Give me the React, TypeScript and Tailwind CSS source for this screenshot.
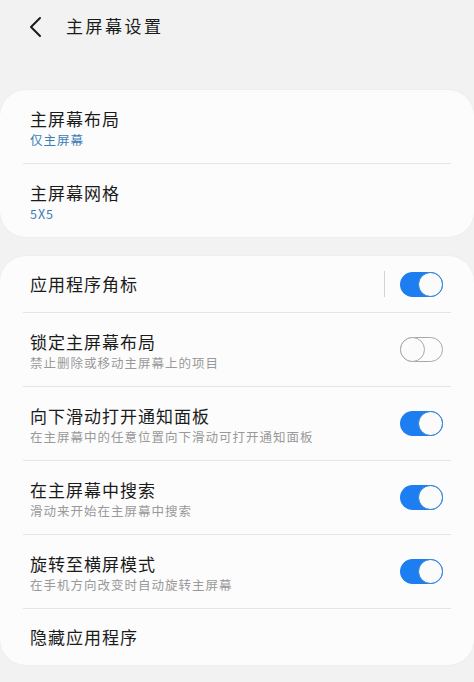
import React from "react";

const font = { fontFamily: '"Noto Sans CJK SC", "Noto Sans", sans-serif' };

function Toggle({ on }: { on: boolean }) {
  if (on) {
    return (
      <div className="relative w-[43px] h-[25px] shrink-0">
        <div className="absolute left-0 top-0 w-[43px] h-[25px] rounded-full bg-[#1c7ef0]" />
        <div className="absolute right-0 top-0 w-[25px] h-[25px] rounded-full bg-[#fbfbfb] border-[1.5px] border-[#2a7fd6]" />
      </div>
    );
  }
  return (
    <div className="relative w-[43px] h-[25px] shrink-0">
      <div className="absolute left-0 top-0 w-[43px] h-[25px] rounded-full border-[1.5px] border-[#a9a9a9]" />
      <div className="absolute left-0 top-0 w-[25px] h-[25px] rounded-full bg-[#fbfbfb] border-[1.5px] border-[#a9a9a9]" />
    </div>
  );
}

function Divider() {
  return <div className="mx-[23px] h-px bg-[#e5e5e5]" />;
}

type Row = { title: string; sub?: string; subBlue?: boolean; toggle?: boolean; on?: boolean; sep?: boolean };

function RowItem({ r }: { r: Row }) {
  const hasSub = !!r.sub;
  return (
    <div className={`flex items-center pl-[30px] pr-[31px] ${hasSub ? "h-[73px]" : "h-[56px]"}`}>
      <div className={`flex-1 flex flex-col ${hasSub ? "pt-[5px]" : ""}`}>
        <div className="text-[17px] leading-[22px] tracking-[1px] text-[#1b1b1b]">{r.title}</div>
        {r.sub && (
          <div
            className={`text-[12.5px] leading-[20px] tracking-[1px] ${r.subBlue ? "text-[#3b7db5]" : "text-[#999999]"}`}
          >
            {r.sub}
          </div>
        )}
      </div>
      {r.sep && <div className="w-px h-[26px] bg-[#d4d4d4] mr-[15px]" />}
      {r.toggle && <Toggle on={!!r.on} />}
    </div>
  );
}

function Card({ rows }: { rows: Row[] }) {
  return (
    <div className="bg-[#fcfcfc] rounded-[26px] shadow-[0_0_2px_rgba(0,0,0,0.06)]">
      {rows.map((r, i) => (
        <React.Fragment key={i}>
          {i > 0 && <Divider />}
          <RowItem r={r} />
        </React.Fragment>
      ))}
    </div>
  );
}

export default function App() {
  const card1: Row[] = [
    { title: "主屏幕布局", sub: "仅主屏幕", subBlue: true },
    { title: "主屏幕网格", sub: "5X5", subBlue: true },
  ];
  const card2: Row[] = [
    { title: "应用程序角标", toggle: true, on: true, sep: true },
    { title: "锁定主屏幕布局", sub: "禁止删除或移动主屏幕上的项目", toggle: true, on: false },
    { title: "向下滑动打开通知面板", sub: "在主屏幕中的任意位置向下滑动可打开通知面板", toggle: true, on: true },
    { title: "在主屏幕中搜索", sub: "滑动来开始在主屏幕中搜索", toggle: true, on: true },
    { title: "旋转至横屏模式", sub: "在手机方向改变时自动旋转主屏幕", toggle: true, on: true },
    { title: "隐藏应用程序" },
  ];
  return (
    <div className="w-[474px] h-[682px] bg-[#f2f2f2] overflow-hidden" style={font}>
      <div className="h-[90px] flex items-start pt-[14px]">
        <div className="w-[66px] flex justify-start pl-[28px] pt-[2px]">
          <svg width="16" height="22" viewBox="0 0 16 22" fill="none">
            <path d="M12 2 L3 11 L12 20" stroke="#1b1b1b" strokeWidth="2" strokeLinecap="round" strokeLinejoin="round" />
          </svg>
        </div>
        <div className="text-[17px] leading-[24px] tracking-[2.5px] text-[#1b1b1b]">主屏幕设置</div>
      </div>
      <Card rows={card1} />
      <div className="h-[19px]" />
      <Card rows={card2} />
    </div>
  );
}
